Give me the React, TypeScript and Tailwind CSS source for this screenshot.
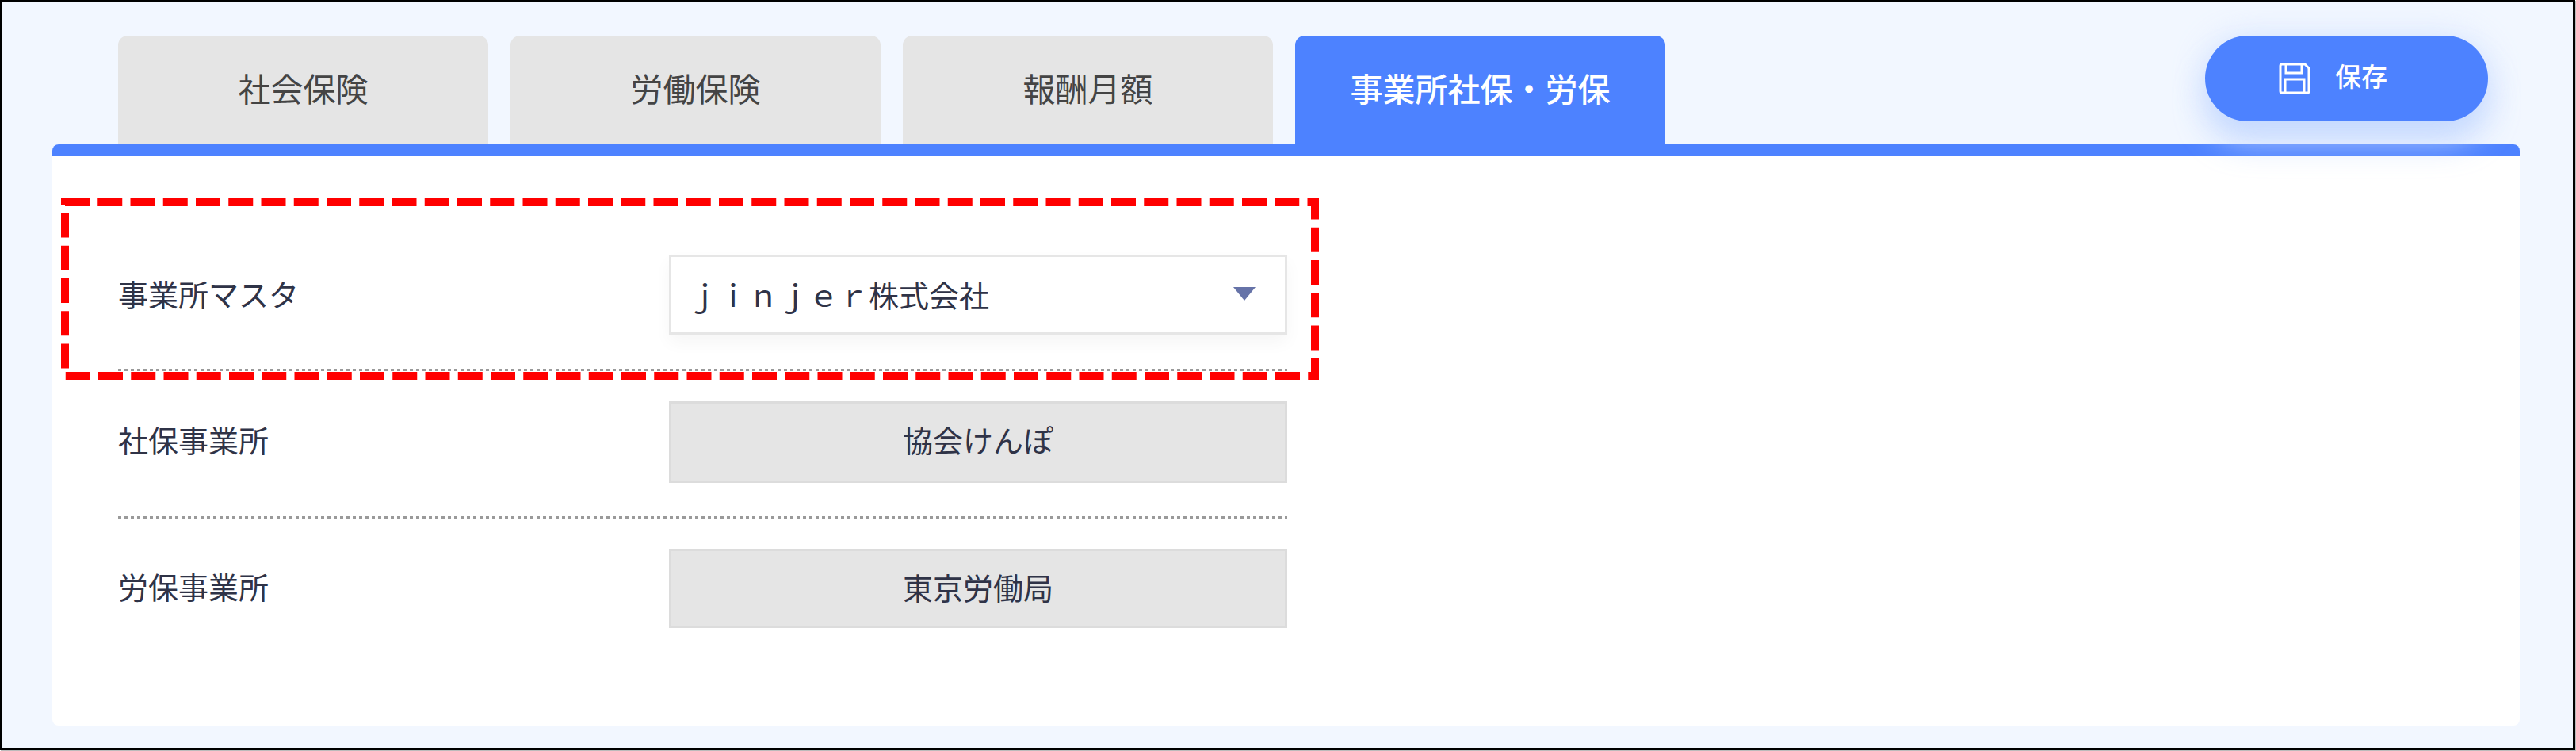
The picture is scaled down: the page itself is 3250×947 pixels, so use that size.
const font = "font-['Noto_Sans_CJK_JP','Noto_Sans',sans-serif]";

const tabs = ["社会保険", "労働保険", "報酬月額"];

function SaveIcon() {
  return (
    <svg viewBox="0 0 40 40" className="w-[40px] h-[40px]" fill="none" stroke="white" strokeWidth="3">
      <path d="M4 2h29l5 5v29a2 2 0 0 1-2 2H4a2 2 0 0 1-2-2V4a2 2 0 0 1 2-2z" />
      <path d="M9 2v11h20V2" />
      <path d="M8 38V21h24v17" />
    </svg>
  );
}

function Divider() {
  return <div className="h-[3px] bg-[repeating-linear-gradient(90deg,#9a9a9a_0_4px,transparent_4px_8px)]" />;
}

export default function App() {
  return (
    <div className={`w-[3250px] h-[947px] bg-white overflow-hidden ${font}`}>
      <div className="relative w-[3249px] h-[946px] border-[3px] border-black bg-[#f2f7ff] flex flex-col pt-[42px] pl-[63px] pr-[67px] pb-[28px] shadow-[1px_1px_0_#bbbbbb]">
        <div className="flex items-end h-[137px] pl-[83px] gap-[28px] shrink-0">
          {tabs.map((t) => (
            <div
              key={t}
              className="w-[467px] h-full bg-[#e5e5e5] rounded-t-[12px] flex items-center justify-center pb-[6px] text-[41px] text-[#444444]"
            >
              {t}
            </div>
          ))}
          <div className="w-[467px] h-full bg-[#4d82ff] rounded-t-[12px] flex items-center justify-center pb-[6px] text-[41px] font-medium text-white">
            事業所社保・労保
          </div>
          <button className="relative z-10 ml-auto mr-[40px] self-start w-[357px] h-[108px] rounded-full bg-[#4d82ff] flex items-center gap-[31px] pl-[93px] text-[33px] font-medium text-white shadow-[0_0_40px_rgba(185,208,255,0.45),0_28px_40px_rgba(190,212,255,0.75)]">
            <SaveIcon />
            <span className="-mt-[6px]">保存</span>
          </button>
        </div>

        <div className="flex-1 bg-white rounded-[8px] border-t-[15px] border-[#4d82ff] pl-[83px] pt-[124px]">
          <div className="w-[1475px] text-[38px] text-[#2f3347]">
            <div className="flex items-center pb-[43px]">
              <div className="w-[695px] shrink-0 pb-[4px]">事業所マスタ</div>
              <div className="w-[780px] h-[101px] bg-white border-[3px] border-[#e6e6e6] shadow-[0_10px_20px_rgba(0,0,0,0.04)] flex items-center justify-between pl-[21px] pr-[37px] pb-[3px]">
                <span>ｊｉｎｊｅｒ株式会社</span>
                <span className="w-0 h-0 border-x-[14px] border-x-transparent border-t-[17px] border-t-[#6673a8]" />
              </div>
            </div>
            <Divider />
            <div className="flex items-center pt-[38px] pb-[42px]">
              <div className="w-[695px] shrink-0 pb-[8px]">社保事業所</div>
              <div className="w-[780px] h-[103px] bg-[#e5e5e5] border-[3px] border-[#dcdcdc] flex items-center justify-center pb-[8px]">
                協会けんぽ
              </div>
            </div>
            <Divider />
            <div className="flex items-center pt-[38px]">
              <div className="w-[695px] shrink-0 pb-[8px]">労保事業所</div>
              <div className="w-[780px] h-[100px] bg-[#e5e5e5] border-[3px] border-[#dcdcdc] flex items-center justify-center pb-[6px]">
                東京労働局
              </div>
            </div>
          </div>
        </div>

        {/* annotation box drawn over the screenshot */}
        <svg className="absolute left-[74px] top-[247px] w-[1588px] h-[229px] overflow-visible" fill="none">
          <rect x="5" y="5" width="1577" height="219" stroke="#ff0000" strokeWidth="10" strokeDasharray="31 10.25" />
        </svg>
      </div>
    </div>
  );
}
